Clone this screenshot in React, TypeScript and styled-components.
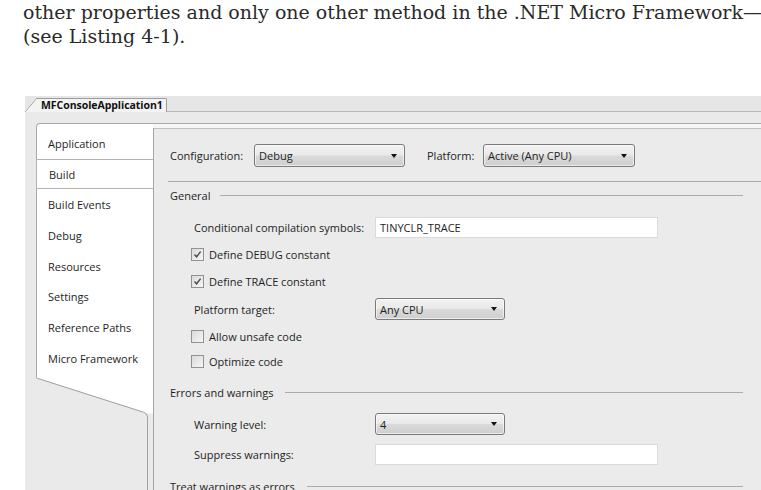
import React from "react";
import styled, { createGlobalStyle } from "styled-components";

const GlobalStyle = createGlobalStyle`
  html, body {
    margin: 0;
    padding: 0;
    background: #fff;
  }
  body {
    width: 761px;
    height: 490px;
    overflow: hidden;
  }
`;

const UI_FONT = `"Open Sans", "Noto Sans", sans-serif`;

const Page = styled.div`
  width: 761px;
  height: 490px;
  overflow: hidden;
  background: #fff;
  display: flex;
  flex-direction: column;
`;

const Prose = styled.p`
  margin: 0;
  padding: 1px 0 0 23px;
  font-family: "DejaVu Serif", serif;
  font-size: 19px;
  line-height: 23.5px;
  color: #2a2a2a;
  white-space: nowrap;
`;

const Window = styled.div`
  margin: 48px 0 0 25px;
  flex: 1;
  min-height: 0;
  background: #eaeaea;
  display: flex;
  flex-direction: column;
  font-family: ${UI_FONT};
  font-size: 11px;
  color: #1e1e1e;
`;

const TabStrip = styled.div`
  height: 16px;
  box-sizing: border-box;
  background: #e6e6e6;
  border-bottom: 1px solid #b9b9b9;
  display: flex;
  align-items: flex-end;
`;

const DocTab = styled.div`
  position: relative;
  margin: 0 0 -1px 12px;
  height: 14px;
  box-sizing: border-box;
  padding: 0 3px 0 4px;
  background: #f3f3f3;
  border-top: 1px solid #9c9c9c;
  border-right: 1px solid #9c9c9c;
  border-top-right-radius: 2px;
  font-weight: 700;
  font-size: 10.5px;
  letter-spacing: -0.05px;
  line-height: 13px;
  color: #111;

  &::before {
    content: "";
    position: absolute;
    left: -12px;
    top: -1px;
    bottom: 0;
    width: 12px;
    background: linear-gradient(
      to top left,
      #f3f3f3 calc(50% - 0.6px),
      #9c9c9c 50%,
      transparent calc(50% + 0.6px)
    );
  }
`;

const Frame = styled.div`
  margin: 11px 0 0 11px;
  flex: 1;
  min-height: 0;
  display: flex;
`;

const Sidebar = styled.div`
  width: 117px;
  flex-shrink: 0;
  display: flex;
  flex-direction: column;
`;

const NavList = styled.ul`
  list-style: none;
  margin: 0;
  padding: 4px 0 4px 0;
  background: #fff;
  border-top: 1px solid #a9a9a9;
  border-left: 1px solid #a9a9a9;
  border-top-left-radius: 4px;
`;

const NavItem = styled.li<{ $active?: boolean }>`
  height: 30.7px;
  box-sizing: border-box;
  display: flex;
  align-items: center;
  padding-left: ${({ $active }) => ($active ? "12px" : "11px")};
  margin-left: ${({ $active }) => ($active ? "-1px" : "0")};
  background: #fff;
  white-space: nowrap;
  border-top: 1px solid ${({ $active }) => ($active ? "#b3b3b3" : "transparent")};
  border-bottom: 1px solid ${({ $active }) => ($active ? "#b3b3b3" : "transparent")};
  border-left: ${({ $active }) => ($active ? "1px solid #b3b3b3" : "none")};
`;

const NavTail = styled.svg`
  display: block;
  flex-shrink: 0;
`;

const NavRest = styled.div`
  flex: 1;
  margin-right: 5px;
  border-right: 1px solid #a3a3a3;
`;

const ContentWrap = styled.div`
  flex: 1;
  min-width: 0;
  display: flex;
  padding-top: 4px;
  background: #f6f6f6;
  border-top: 1px solid #a9a9a9;
`;

const Panel = styled.div`
  flex: 1;
  min-width: 0;
  background: #ebebeb;
  border-top: 1px solid #c0c0c0;
  border-left: 1px solid #a6a6a6;
  padding-left: 16px;
  display: flex;
  flex-direction: column;
`;

const Row = styled.div<{ $top: number; $h: number; $indent?: number }>`
  margin-top: ${({ $top }) => $top}px;
  height: ${({ $h }) => $h}px;
  padding-left: ${({ $indent }) => $indent ?? 0}px;
  display: flex;
  align-items: center;
  flex-shrink: 0;
  white-space: nowrap;
`;

const InlineLabel = styled.span<{ $w: number; $gap?: number }>`
  width: ${({ $w }) => $w}px;
  margin-left: ${({ $gap }) => $gap ?? 0}px;
  flex-shrink: 0;
`;

const Divider = styled.div`
  margin: 14px 0 0 -2px;
  height: 1px;
  background: #a9a9a9;
  flex-shrink: 0;
`;

const SectionRow = styled(Row)`
  padding-right: 18px;
`;

const SectionRule = styled.span<{ $gap: number }>`
  flex: 1;
  height: 1px;
  margin-left: ${({ $gap }) => $gap}px;
  background: #ababab;
`;

const ComboBox = styled.div<{ $w: number; $h?: number }>`
  width: ${({ $w }) => $w}px;
  height: ${({ $h }) => $h ?? 22}px;
  box-sizing: border-box;
  flex-shrink: 0;
  display: flex;
  align-items: center;
  justify-content: space-between;
  padding: 0 7px 0 4px;
  border: 1px solid #7a7a7a;
  border-radius: 3px;
  background: linear-gradient(#f2f2f2 0%, #e9e9e9 48%, #dadada 52%, #cecece 100%);
  box-shadow: inset 0 0 0 1px rgba(255, 255, 255, 0.6);
`;

const Caret = styled.span`
  width: 0;
  height: 0;
  border-left: 3.5px solid transparent;
  border-right: 3.5px solid transparent;
  border-top: 4px solid #111;
`;

const TextBox = styled.div<{ $w: number }>`
  width: ${({ $w }) => $w}px;
  height: 21px;
  box-sizing: border-box;
  flex-shrink: 0;
  display: flex;
  align-items: center;
  padding-left: 4px;
  background: #fff;
  border: 1px solid #dadada;
`;

const CheckBox = styled.span`
  width: 13px;
  height: 13px;
  box-sizing: border-box;
  flex-shrink: 0;
  margin-right: 5px;
  border: 1px solid #929292;
  background: linear-gradient(135deg, #dadada, #f6f6f6);
  display: flex;
  align-items: center;
  justify-content: center;
`;

function Check({ on }: { on: boolean }) {
  return (
    <CheckBox>
      {on && (
        <svg width="9" height="9" viewBox="0 0 9 9">
          <path d="M1.5 4.5 L3.6 6.8 L7.6 1.6" fill="none" stroke="#4a4a4a" strokeWidth="1.4" />
        </svg>
      )}
    </CheckBox>
  );
}

const navItems = [
  "Application",
  "Build",
  "Build Events",
  "Debug",
  "Resources",
  "Settings",
  "Reference Paths",
  "Micro Framework",
];

export default function App() {
  return (
    <Page>
      <GlobalStyle />
      <Prose>
        other properties and only one other method in the .NET Micro Framework—
        <br />
        (see Listing 4-1).
      </Prose>

      <Window>
        <TabStrip>
          <DocTab>MFConsoleApplication1</DocTab>
        </TabStrip>

        <Frame>
          <Sidebar>
            <NavList>
              {navItems.map((item) => (
                <NavItem key={item} $active={item === "Build"}>
                  {item}
                </NavItem>
              ))}
            </NavList>
            <NavTail width="117" height="40" viewBox="0 0 117 40">
              <path d="M0 0 H117 V35.5 H111.5 Z" fill="#fff" />
              <path
                d="M0.5 0 L107.5 34.2 Q111.5 35.5 111.5 39 V40"
                fill="none"
                stroke="#9d9d9d"
                strokeWidth="1"
              />
            </NavTail>
            <NavRest />
          </Sidebar>

          <ContentWrap>
            <Panel>
              <Row $top={15} $h={23}>
                <InlineLabel $w={84}>Configuration:</InlineLabel>
                <ComboBox $w={151} $h={23}>
                  Debug
                  <Caret />
                </ComboBox>
                <InlineLabel $w={56} $gap={22}>
                  Platform:
                </InlineLabel>
                <ComboBox $w={152} $h={23}>
                  Active (Any CPU)
                  <Caret />
                </ComboBox>
              </Row>

              <Divider />

              <SectionRow $top={6} $h={14}>
                General
                <SectionRule $gap={10} />
              </SectionRow>

              <Row $top={14} $h={22} $indent={24}>
                <InlineLabel $w={181}>Conditional compilation symbols:</InlineLabel>
                <TextBox $w={283}>TINYCLR_TRACE</TextBox>
              </Row>
              <Row $top={6} $h={20} $indent={21}>
                <Check on />
                Define DEBUG constant
              </Row>
              <Row $top={7} $h={20} $indent={21}>
                <Check on />
                Define TRACE constant
              </Row>
              <Row $top={7} $h={22} $indent={24}>
                <InlineLabel $w={181}>Platform target:</InlineLabel>
                <ComboBox $w={130}>
                  Any CPU
                  <Caret />
                </ComboBox>
              </Row>
              <Row $top={6} $h={20} $indent={21}>
                <Check on={false} />
                Allow unsafe code
              </Row>
              <Row $top={5} $h={20} $indent={21}>
                <Check on={false} />
                Optimize code
              </Row>

              <SectionRow $top={14} $h={14}>
                Errors and warnings
                <SectionRule $gap={12} />
              </SectionRow>

              <Row $top={14} $h={22} $indent={24}>
                <InlineLabel $w={181}>Warning level:</InlineLabel>
                <ComboBox $w={130}>
                  4
                  <Caret />
                </ComboBox>
              </Row>
              <Row $top={8} $h={22} $indent={24}>
                <InlineLabel $w={181}>Suppress warnings:</InlineLabel>
                <TextBox $w={283} />
              </Row>

              <SectionRow $top={14} $h={14}>
                Treat warnings as errors
                <SectionRule $gap={12} />
              </SectionRow>
            </Panel>
          </ContentWrap>
        </Frame>
      </Window>
    </Page>
  );
}
